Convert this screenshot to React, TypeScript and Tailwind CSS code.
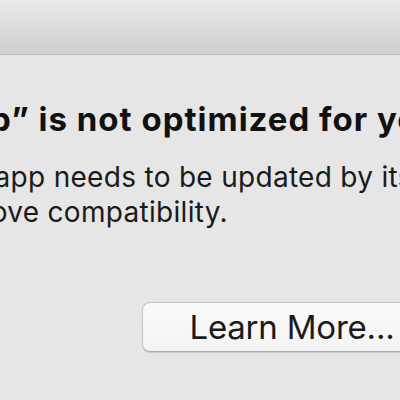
import React from "react";

export default function App() {
  return (
    <div
      className="w-[400px] h-[400px] overflow-hidden bg-[#e6e6e6] flex flex-col"
      style={{ fontFamily: "Inter, 'Liberation Sans', sans-serif" }}
    >
      <div className="h-[55px] shrink-0 bg-gradient-to-b from-[#ebe9eb] to-[#d0ced0] border-b border-[#b9b8ba]" />
      <div className="whitespace-nowrap">
        <div className="ml-[-73px] mt-[44px] text-[33px] leading-[40px] font-bold text-[#111] tracking-[1px]">
          “App” is not optimized for your Mac
        </div>
        <div className="mt-[21px] text-[28px] leading-[35px] text-[#1a1a1a] tracking-[0.3px]">
          <div className="ml-[-71px]">This app needs to be updated by its developer to</div>
          <div className="ml-[-69px]">improve compatibility.</div>
        </div>
      </div>
      <div className="mt-[72px] ml-[142px] flex">
        <button className="w-[300px] h-[50px] shrink-0 rounded-[8px] border border-[#c3c3c3] border-b-[#a9a9a9] bg-gradient-to-b from-[#fbfbfb] to-[#f3f3f3] shadow-[0_1px_1px_rgba(0,0,0,0.12)] flex items-center justify-center text-[33px] leading-[40px] text-[#1a1a1a] tracking-[-0.2px]">
          Learn More...
        </button>
      </div>
    </div>
  );
}
